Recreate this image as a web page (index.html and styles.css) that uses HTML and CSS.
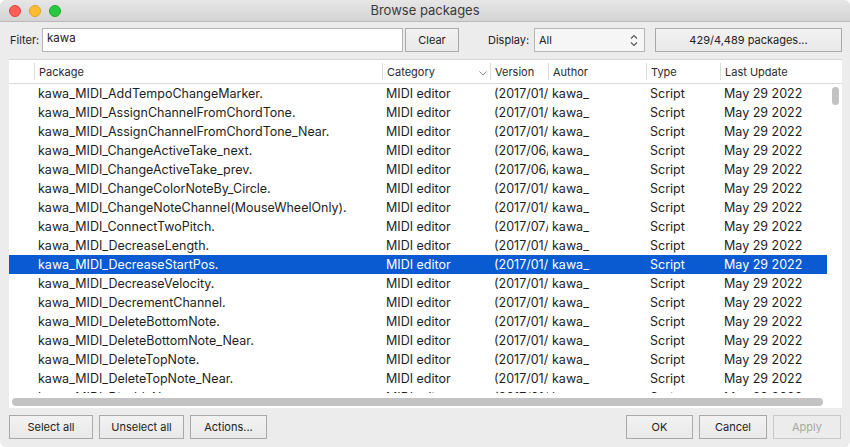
FILE: index.html
```html
<!DOCTYPE html>
<html>
<head>
<meta charset="utf-8">
<link rel="stylesheet" href="styles.css">
</head>
<body>
<div class="window">
  <div class="titlebar">
    <div class="lights">
      <span class="light red"></span>
      <span class="light yellow"></span>
      <span class="light green"></span>
    </div>
    <div class="title">Browse packages</div>
  </div>
  <div class="toolbar">
    <label class="lbl lbl-filter">Filter:</label>
    <div class="input">kawa</div>
    <button class="btn btn-clear">Clear</button>
    <label class="lbl lbl-display">Display:</label>
    <div class="select">
      <span>All</span>
      <svg class="stepper" width="8" height="13" viewBox="0 0 8 13"><path d="M1 4.5 L4 1.5 L7 4.5 M1 8.5 L4 11.5 L7 8.5" fill="none" stroke="#555" stroke-width="1.1"/></svg>
    </div>
    <button class="btn btn-count">429/4,489 packages...</button>
  </div>
  <div class="list">
    <div class="header">
      <div class="hcell"></div>
      <div class="hcell">Package</div>
      <div class="hcell">Category<svg class="sort" width="8" height="5" viewBox="0 0 8 5"><path d="M0.5 0.5 L4 4 L7.5 0.5" fill="none" stroke="#888" stroke-width="1"/></svg></div>
      <div class="hcell">Version</div>
      <div class="hcell">Author</div>
      <div class="hcell">Type</div>
      <div class="hcell">Last Update</div>
    </div>
    <div class="body">
      <div class="rows">
        <div class="row"><div></div><div>kawa_MIDI_AddTempoChangeMarker.</div><div>MIDI editor</div><div>(2017/01/</div><div>kawa_</div><div>Script</div><div>May 29 2022</div></div>
        <div class="row"><div></div><div>kawa_MIDI_AssignChannelFromChordTone.</div><div>MIDI editor</div><div>(2017/01/</div><div>kawa_</div><div>Script</div><div>May 29 2022</div></div>
        <div class="row"><div></div><div>kawa_MIDI_AssignChannelFromChordTone_Near.</div><div>MIDI editor</div><div>(2017/01/</div><div>kawa_</div><div>Script</div><div>May 29 2022</div></div>
        <div class="row"><div></div><div>kawa_MIDI_ChangeActiveTake_next.</div><div>MIDI editor</div><div>(2017/06/</div><div>kawa_</div><div>Script</div><div>May 29 2022</div></div>
        <div class="row"><div></div><div>kawa_MIDI_ChangeActiveTake_prev.</div><div>MIDI editor</div><div>(2017/06/</div><div>kawa_</div><div>Script</div><div>May 29 2022</div></div>
        <div class="row"><div></div><div>kawa_MIDI_ChangeColorNoteBy_Circle.</div><div>MIDI editor</div><div>(2017/01/</div><div>kawa_</div><div>Script</div><div>May 29 2022</div></div>
        <div class="row"><div></div><div>kawa_MIDI_ChangeNoteChannel(MouseWheelOnly).</div><div>MIDI editor</div><div>(2017/01/</div><div>kawa_</div><div>Script</div><div>May 29 2022</div></div>
        <div class="row"><div></div><div>kawa_MIDI_ConnectTwoPitch.</div><div>MIDI editor</div><div>(2017/07/</div><div>kawa_</div><div>Script</div><div>May 29 2022</div></div>
        <div class="row"><div></div><div>kawa_MIDI_DecreaseLength.</div><div>MIDI editor</div><div>(2017/01/</div><div>kawa_</div><div>Script</div><div>May 29 2022</div></div>
        <div class="row selected"><div></div><div>kawa_MIDI_DecreaseStartPos.</div><div>MIDI editor</div><div>(2017/01/</div><div>kawa_</div><div>Script</div><div>May 29 2022</div></div>
        <div class="row"><div></div><div>kawa_MIDI_DecreaseVelocity.</div><div>MIDI editor</div><div>(2017/01/</div><div>kawa_</div><div>Script</div><div>May 29 2022</div></div>
        <div class="row"><div></div><div>kawa_MIDI_DecrementChannel.</div><div>MIDI editor</div><div>(2017/01/</div><div>kawa_</div><div>Script</div><div>May 29 2022</div></div>
        <div class="row"><div></div><div>kawa_MIDI_DeleteBottomNote.</div><div>MIDI editor</div><div>(2017/01/</div><div>kawa_</div><div>Script</div><div>May 29 2022</div></div>
        <div class="row"><div></div><div>kawa_MIDI_DeleteBottomNote_Near.</div><div>MIDI editor</div><div>(2017/01/</div><div>kawa_</div><div>Script</div><div>May 29 2022</div></div>
        <div class="row"><div></div><div>kawa_MIDI_DeleteTopNote.</div><div>MIDI editor</div><div>(2017/01/</div><div>kawa_</div><div>Script</div><div>May 29 2022</div></div>
        <div class="row"><div></div><div>kawa_MIDI_DeleteTopNote_Near.</div><div>MIDI editor</div><div>(2017/01/</div><div>kawa_</div><div>Script</div><div>May 29 2022</div></div>
        <div class="row"><div></div><div>kawa_MIDI_DisableNotes.</div><div>MIDI editor</div><div>(2017/01/</div><div>kawa_</div><div>Script</div><div>May 29 2022</div></div>
      </div>
      <div class="vscroll"><div class="vthumb"></div></div>
    </div>
    <div class="hscrollrow">
      <div class="hscroll"><div class="hthumb"></div></div>
      <div class="corner"></div>
    </div>
  </div>
  <div class="footer">
    <button class="btn btn-sel">Select all</button>
    <button class="btn btn-unsel">Unselect all</button>
    <button class="btn btn-act">Actions...</button>
    <div class="spacer"></div>
    <button class="btn btn-ok">OK</button>
    <button class="btn btn-cancel">Cancel</button>
    <button class="btn btn-apply" disabled>Apply</button>
  </div>
</div>
</body>
</html>
```

FILE: styles.css
```css
* { box-sizing: border-box; }
html, body { margin: 0; padding: 0; background: #ffffff; }
body { font-family: Inter, "Liberation Sans", sans-serif; color: #222; }

.window {
  width: 850px;
  height: 447px;
  background: #ececec;
  border-radius: 6px;
  overflow: hidden;
  display: flex;
  flex-direction: column;
}

.titlebar {
  height: 22px;
  flex: none;
  background: linear-gradient(#e6e6e6, #d4d4d4);
  border-bottom: 1px solid #b9b9b9;
  display: flex;
  align-items: center;
  position: relative;
}
.lights { display: flex; gap: 8px; padding-left: 9px; }
.light { width: 12px; height: 12px; border-radius: 50%; display: block; }
.red { background: #fd5f57; border: 0.5px solid #e0443e; }
.yellow { background: #febc2e; border: 0.5px solid #dea123; }
.green { background: #28c840; border: 0.5px solid #1aab29; }
.title {
  position: absolute; left: 0; right: 0; top: 0; bottom: 0;
  text-align: center; line-height: 21px;
  font-size: 13px; color: #3a3a3a;
}

.toolbar {
  height: 37px;
  flex: none;
  display: flex;
  align-items: flex-start;
  padding-top: 6px;
  padding-left: 10px;
}
.lbl { font-size: 11px; line-height: 24px; color: #222; }
.lbl-filter { width: 32px; }
.input {
  width: 361px; height: 24px;
  background: #fff;
  border: 1px solid #b5b5b5;
  font-size: 11.5px; padding: 2px 0 0 4px;
}
.btn {
  font-family: Inter, "Liberation Sans", sans-serif;
  font-size: 11px;
  color: #222;
  height: 24px;
  border: 1px solid #a9a9a9;
  background: linear-gradient(#f2f2f2, #e9e9e9);
  border-radius: 0;
  padding: 0;
  margin: 0;
}
.btn-clear { width: 54px; margin-left: 2px; }
.lbl-display { margin-left: 29px; width: 46px; }
.select {
  width: 111px; height: 24px;
  background: #f6f6f6;
  border: 1px solid #b5b5b5;
  font-size: 11px;
  display: flex; align-items: center; justify-content: space-between;
  padding: 0 6px 0 4px;
}
.btn-count { width: 187px; margin-left: 10px; }

.list {
  margin: 0 8px 0 9px;
  height: 349px;
  flex: none;
  background: #fff;
  border-top: 1px solid #d6d6d6;
  display: flex;
  flex-direction: column;
}
.header, .row {
  display: grid;
  grid-template-columns: 25px 348px 108px 58px 98px 74px 107px;
}
.header {
  height: 24px;
  flex: none;
  border-bottom: 1px solid #dadada;
  font-size: 11px;
  color: #2a2a2a;
}
.hcell {
  display: flex; align-items: center;
  padding-left: 4px;
  border-left: 1px solid #dcdcdc;
  margin: 3px 0;
  position: relative;
  white-space: nowrap;
}
.hcell:first-child { border-left: none; }
.sort { position: absolute; right: 3px; top: 8px; }

.body { flex: 1; display: flex; overflow: hidden; min-height: 0; }
.rows { width: 818px; overflow: hidden; }
.row {
  height: 19px;
  font-size: 12.5px;
  line-height: 19px;
  color: #1e1e1e;
}
.row > div { overflow: hidden; white-space: nowrap; padding-left: 4px; }
.row.selected { background: #0a5ad2; color: #fff; }

.vscroll { width: 15px; flex: none; padding: 3px 0 0 5px; }
.vthumb { width: 7px; height: 18px; border-radius: 4px; background: #c2c2c2; }

.hscrollrow { height: 15px; flex: none; display: flex; }
.hscroll { flex: 1; padding: 5px 4px 0 3px; }
.hthumb { height: 8px; border-radius: 4px; background: #c3c3c3; }
.corner { width: 15px; }

.footer {
  flex: 1;
  display: flex;
  align-items: flex-start;
  padding: 7px 9px 0 9px;
}
.btn-sel { width: 84px; }
.btn-unsel { width: 85px; margin-left: 6px; }
.btn-act { width: 77px; margin-left: 6px; }
.spacer { flex: 1; }
.btn-ok { width: 67px; }
.btn-cancel { width: 68px; margin-left: 6px; }
.btn-apply { width: 68px; margin-left: 6px; color: #a8a8a8; border-color: #c8c8c8; background: #ececec; }
```
